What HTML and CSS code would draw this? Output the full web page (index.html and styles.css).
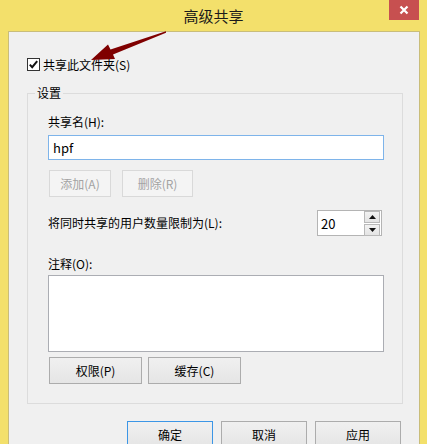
FILE: index.html
```html
<!DOCTYPE html>
<html lang="zh-CN">
<head>
<meta charset="utf-8">
<title>高级共享</title>
<link rel="stylesheet" href="styles.css">
</head>
<body>
<div class="window">
  <div class="titlebar">
    <div class="title">高级共享</div>
    <div class="close"><svg width="10" height="10" viewBox="0 0 10 10"><path d="M1.5 1.5 L8.5 8.5 M8.5 1.5 L1.5 8.5" stroke="#fff" stroke-width="2.2" fill="none"/></svg></div>
  </div>
  <div class="client">
    <label class="check-row">
      <span class="checkbox"><svg width="11" height="11" viewBox="0 0 11 11"><path d="M1.8 5.6 L4.2 8.2 L9.2 2.2" stroke="#111" stroke-width="2" fill="none"/></svg></span>
      <span>共享此文件夹(S)</span>
    </label>
    <fieldset class="group">
      <legend>设置</legend>
      <div class="group-body">
        <div class="label">共享名(H):</div>
        <div class="textbox focused">hpf</div>
        <div class="btn-row">
          <div class="btn disabled w-add">添加(A)</div>
          <div class="btn disabled w-del">删除(R)</div>
        </div>
        <div class="limit-row">
          <div class="label">将同时共享的用户数量限制为(L):</div>
          <div class="spinner">
            <span class="spin-value">20</span>
            <div class="spin-btns">
              <div class="spin-btn"><svg width="7" height="4" viewBox="0 0 7 4"><path d="M0 4 L3.5 0 L7 4 Z" fill="#111"/></svg></div>
              <div class="spin-btn"><svg width="7" height="4" viewBox="0 0 7 4"><path d="M0 0 L7 0 L3.5 4 Z" fill="#111"/></svg></div>
            </div>
          </div>
        </div>
        <div class="label comment-label">注释(O):</div>
        <div class="textarea"></div>
        <div class="btn-row2">
          <div class="btn w-perm">权限(P)</div>
          <div class="btn w-perm">缓存(C)</div>
        </div>
      </div>
    </fieldset>
    <div class="footer">
      <div class="btn default w-foot">确定</div>
      <div class="btn w-foot">取消</div>
      <div class="btn w-foot">应用</div>
    </div>
  </div>
  <svg class="arrow" width="427" height="444" viewBox="0 0 427 444"><path d="M166 31.2 L166 32.8 L113 54.5 L115 59 L91 60 L108 44.5 L110.5 49.5 Z" fill="#7f0000"/></svg>
</div>
</body>
</html>
```
FILE: styles.css
```css
html, body {
  margin: 0;
  padding: 0;
}
body {
  width: 427px;
  height: 444px;
  overflow: hidden;
  background: #f3e06b;
  font-family: "Noto Sans CJK SC", "Liberation Sans", sans-serif;
  font-size: 12px;
  color: #000;
}
.window {
  position: relative;
  width: 427px;
  height: 444px;
}
.titlebar {
  height: 31px;
  display: grid;
  grid-template-columns: 1fr auto 1fr;
}
.title {
  grid-column: 2;
  font-size: 15px;
  line-height: 31px;
  color: #1a1a1a;
}
.close {
  grid-column: 3;
  justify-self: end;
  margin-right: 8px;
  width: 30px;
  height: 20px;
  background: #c75050;
  display: flex;
  align-items: center;
  justify-content: center;
}
.client {
  margin-left: 8px;
  width: 410px;
  height: 420px;
  background: #f0f0f0;
  border-top: 1px solid #c9bd7a;
  border-left: 1px solid #c9bd7a;
  border-right: 1px solid #c9bd7a;
}
.check-row {
  display: flex;
  align-items: center;
  gap: 3px;
  margin: 26px 0 0 18px;
  height: 13px;
  line-height: 13px;
}
.checkbox {
  width: 11px;
  height: 11px;
  border: 1px solid #333;
  background: #fff;
  display: flex;
}
.group {
  margin: 14px 16px 0 18px;
  padding: 13px 0 19px 0;
  border: 1px solid #dcdcdc;
}
.group legend {
  margin-left: 7px;
  padding: 0 2px;
  line-height: 16px;
  height: 16px;
}
.group-body {
  padding-left: 20px;
  padding-right: 18px;
}
.label {
  line-height: 16px;
  height: 16px;
}
.textbox {
  margin-top: 5px;
  height: 23px;
  line-height: 23px;
  border: 1px solid #abadb3;
  background: #fff;
  padding-left: 4px;
  font-size: 13px;
}
.textbox.focused {
  border-color: #7eb4ea;
}
.btn-row {
  display: flex;
  gap: 11px;
  margin-top: 10px;
  margin-left: 1px;
}
.btn {
  height: 25px;
  line-height: 25px;
  text-align: center;
  border: 1px solid #acacac;
  background: linear-gradient(#f0f0f0, #e5e5e5);
  box-sizing: content-box;
}
.btn.disabled {
  border-color: #d9d9d9;
  background: #f4f4f4;
  color: #a3a3a3;
}
.btn.default {
  border-color: #3c96e6;
}
.w-add { width: 60px; }
.w-del { width: 69px; }
.w-perm { width: 91px; }
.w-foot { width: 84px; }
.limit-row {
  display: flex;
  align-items: center;
  justify-content: space-between;
  margin-top: 13px;
  height: 26px;
}
.spinner {
  width: 63px;
  height: 24px;
  margin-right: 2px;
  border: 1px solid #b4b4b4;
  background: #fff;
  display: flex;
  align-items: center;
  justify-content: space-between;
}
.spin-value {
  padding-left: 3px;
  font-size: 13px;
}
.spin-btns {
  display: flex;
  flex-direction: column;
  gap: 1px;
  margin-right: 1px;
}
.spin-btn {
  width: 14px;
  height: 10px;
  border: 1px solid #b9b9b9;
  background: linear-gradient(#f2f2f2, #e4e4e4);
  display: flex;
  align-items: center;
  justify-content: center;
  box-sizing: content-box;
}
.comment-label {
  margin-top: 20px;
}
.textarea {
  margin-top: 3px;
  height: 75px;
  border: 1px solid #abadb3;
  background: #fff;
}
.btn-row2 {
  display: flex;
  gap: 6px;
  margin-top: 5px;
  margin-left: 1px;
}
.footer {
  display: flex;
  justify-content: flex-end;
  gap: 8px;
  margin-top: 17px;
  margin-right: 18px;
}
.arrow {
  position: absolute;
  left: 0;
  top: 0;
  pointer-events: none;
}
```
